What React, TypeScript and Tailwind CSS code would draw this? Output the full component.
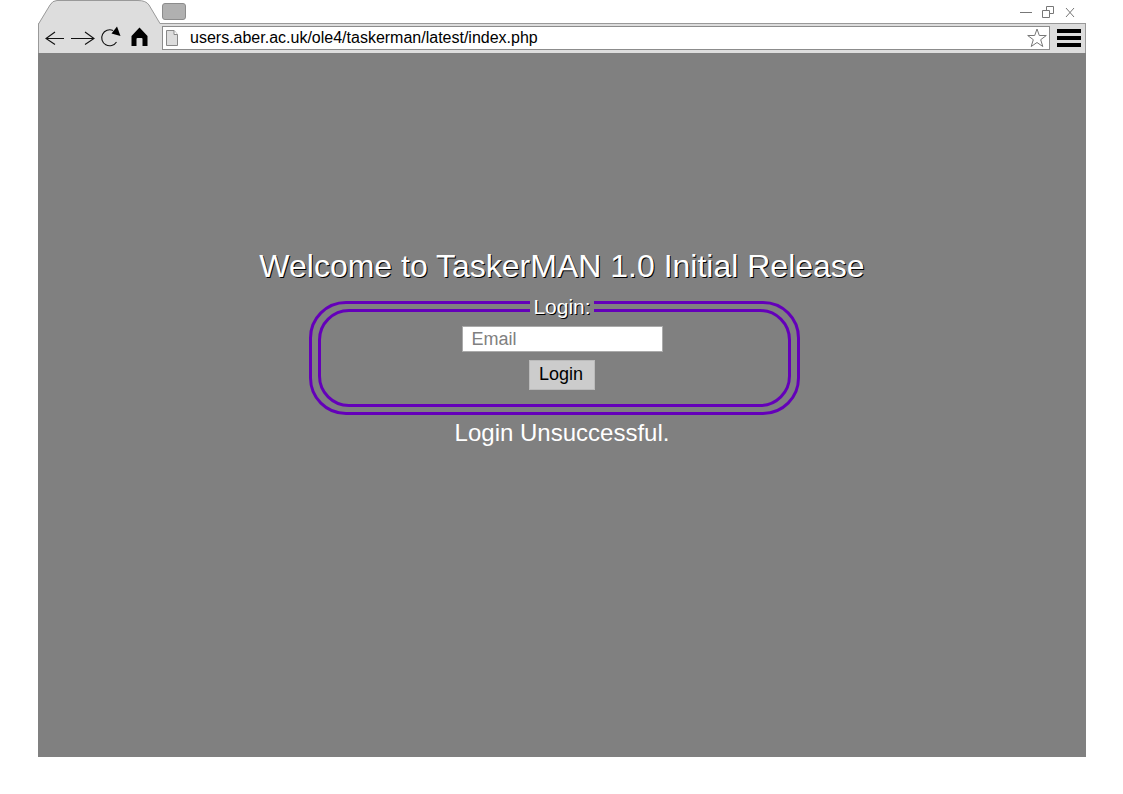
import type { ReactNode } from 'react';

function Stroke({ children, className }: { children: ReactNode; className: string }) {
  return (
    <svg aria-hidden="true" className={className} viewBox="0 0 24 24" fill="none" stroke="#111" strokeWidth="1.1">
      {children}
    </svg>
  );
}

function TabStrip() {
  return (
    <div className="relative z-10 -mb-px flex h-6 items-start">
      <svg aria-hidden="true" className="h-6 w-[124px] shrink-0" viewBox="0 0 124 24">
        <path d="M0 24 L0.5 23.5 L12 5 Q14.500 0.5 19 0.5 H100 Q108 0.5 111 5 L122 23.500 V24 Z" fill="#ddd" />
        <path d="M0.5 24 L12 5 Q14.500 0.5 19 0.5 H100 Q108 0.5 111 5 L122 23.500 H124" fill="none" stroke="#999" />
      </svg>
      <button type="button" aria-label="New tab" className="mt-[3px] h-[17px] w-6 rounded-[3px] border border-[#8c8c8c] bg-[#b0b0b0]" />
      <div className="mr-[5px] ml-auto flex pt-1">
        <button type="button" aria-label="Minimize" className="flex w-[22px] justify-center">
          <svg className="h-4 w-4" viewBox="0 0 16 16" stroke="#777"><path d="M2 8.500H14" /></svg>
        </button>
        <button type="button" aria-label="Restore" className="flex w-[22px] justify-center">
          <svg className="h-4 w-4" viewBox="0 0 16 16" fill="#fff" stroke="#777">
            <path d="M6.500 2.500H13.500V9.500H6.500Z" /><path d="M2.500 6.500H9.500V13.500H2.500Z" />
          </svg>
        </button>
        <button type="button" aria-label="Close" className="flex w-[22px] justify-center">
          <svg className="h-4 w-4" viewBox="0 0 16 16" stroke="#777"><path d="M4 4L12 13M12 4L4 13" /></svg>
        </button>
      </div>
    </div>
  );
}

function Toolbar() {
  return (
    <div className="flex h-[30px] items-start border border-b-0 border-[#999] bg-[#ddd] pt-[2px] pr-1">
      <nav aria-label="Browser" className="flex w-[123px] shrink-0 items-center gap-1 pl-1">
        <button type="button" aria-label="Back">
          <Stroke className="h-6 w-6"><path d="M12 6L3 12.500L12 18.500M3 12.500H21" /></Stroke>
        </button>
        <button type="button" aria-label="Forward">
          <Stroke className="h-6 w-6"><path d="M14 6L23 12.500L14 18.500M23 12.500H0" /></Stroke>
        </button>
        <button type="button" aria-label="Reload">
          <Stroke className="h-6 w-6">
            <path d="M14 4.500A8 8 0 1 0 17.500 16" />
            <path d="M12.500 7.500L18 0.500L21.500 10Z" fill="#000" stroke="none" />
          </Stroke>
        </button>
        <button type="button" aria-label="Home">
          <svg className="h-6 w-6" viewBox="0 0 24 24">
            <path d="M4.500 10L12.500 1.500L20.500 10V20H15.500V13Q15.500 12 14.500 12H10.500Q9.500 12 9.500 13V20H4.500Z" fill="#000" />
          </svg>
        </button>
      </nav>
      <div className="flex h-6 min-w-0 flex-1 items-center border border-[#8c8c8c] bg-white pl-[2px]">
        <svg aria-hidden="true" className="h-[18px] w-[14px] shrink-0" viewBox="0 0 14 18" fill="#ddd" stroke="#888">
          <path d="M1.500 1.500H9L12.500 5.500V16.500H1.500Z" /><path d="M9 1.500V5.500H12.500" fill="#fff" />
        </svg>
        <input
          aria-label="Address"
          defaultValue="users.aber.ac.uk/ole4/taskerman/latest/index.php"
          className="ml-[11px] h-5 min-w-0 flex-1 text-[16px] leading-5 text-black outline-none"
        />
        <button type="button" aria-label="Bookmark" className="mr-[2px]">
          <svg className="h-5 w-5" viewBox="0 0 20 20" fill="#fff" stroke="#777">
            <path d="M10 1L12.300 7.500H19.300L13.700 11.700L15.800 18.500L10 14.500L4.200 18.500L6.300 11.700L0.700 7.500H7.700Z" />
          </svg>
        </button>
      </div>
      <button type="button" aria-label="Menu" className="ml-[7px] flex h-6 items-center">
        <svg className="h-[18px] w-6" viewBox="0 0 24 18"><path d="M0 0H24V4H0ZM0 7H24V11H0ZM0 14H24V18H0Z" /></svg>
      </button>
    </div>
  );
}

export default function App() {
  return (
    <div className="min-h-screen bg-white pr-[37px] pb-[37px] pl-[38px] font-['Liberation_Sans',Arial,sans-serif]">
      <div className="flex min-h-[757px] flex-col">
        <TabStrip />
        <Toolbar />
        <main className="flex flex-1 flex-col items-center bg-[#808080] pt-[193px] text-white">
          <h1 className="text-[32px] leading-10 [text-shadow:1px_1px_0_#000]">
            Welcome to TaskerMAN 1.0 Initial Release
          </h1>
          <form className="mr-[15px] mt-[15px] w-full max-w-[491px]" onSubmit={(e) => e.preventDefault()}>
            <fieldset
              aria-labelledby="login-title"
              className="relative rounded-[37px] border-[3px] border-[#6400b9] px-[6px] py-[5px]"
            >
              <div
                id="login-title"
                className="absolute inset-x-0 -top-[9px] flex justify-center pl-[15px] text-[21px] leading-6 [text-shadow:1px_1px_0_#000]"
              >
                <span className="bg-[#808080] px-[3px]">Login:</span>
              </div>
              <div className="flex flex-col items-center gap-2 rounded-[31px] border-[3px] border-[#6400b9] pt-[14px] pb-[14px] pl-[15px]">
                <input
                  type="email"
                  aria-label="Email"
                  placeholder="Email"
                  className="h-[26px] w-[201px] border border-[#aaa] bg-white px-[9px] text-[18px] leading-6 text-black outline-none placeholder:text-[#808080]"
                />
                <button
                  type="submit"
                  className="h-[30px] w-[66px] border border-[#bbb] bg-[#ccc] pr-[2px] pb-[2px] text-[18px] leading-6 text-black"
                >
                  Login
                </button>
              </div>
            </fieldset>
          </form>
          <p role="status" className="mt-[2px] text-[24px] leading-8">
            Login Unsuccessful.
          </p>
        </main>
      </div>
    </div>
  );
}
